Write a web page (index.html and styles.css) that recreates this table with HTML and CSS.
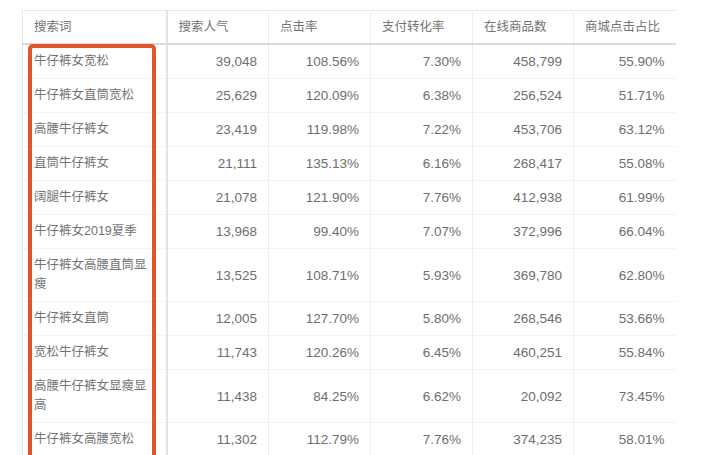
FILE: index.html
```html
<!DOCTYPE html>
<html lang="zh-CN">
<head>
<meta charset="utf-8">
<title>搜索词</title>
<link rel="stylesheet" href="styles.css">
</head>
<body>
<div class="wrap">
  <table class="data">
    <colgroup>
      <col class="c1"><col class="cn"><col class="cn"><col class="cn"><col class="c5"><col class="cn">
    </colgroup>
    <thead>
      <tr><th>搜索词</th><th>搜索人气</th><th>点击率</th><th>支付转化率</th><th>在线商品数</th><th>商城点击占比</th></tr>
    </thead>
    <tbody>
      <tr><td>牛仔裤女宽松</td><td>39,048</td><td>108.56%</td><td>7.30%</td><td>458,799</td><td>55.90%</td></tr>
      <tr><td>牛仔裤女直筒宽松</td><td>25,629</td><td>120.09%</td><td>6.38%</td><td>256,524</td><td>51.71%</td></tr>
      <tr><td>高腰牛仔裤女</td><td>23,419</td><td>119.98%</td><td>7.22%</td><td>453,706</td><td>63.12%</td></tr>
      <tr><td>直筒牛仔裤女</td><td>21,111</td><td>135.13%</td><td>6.16%</td><td>268,417</td><td>55.08%</td></tr>
      <tr><td>阔腿牛仔裤女</td><td>21,078</td><td>121.90%</td><td>7.76%</td><td>412,938</td><td>61.99%</td></tr>
      <tr><td>牛仔裤女2019夏季</td><td>13,968</td><td>99.40%</td><td>7.07%</td><td>372,996</td><td>66.04%</td></tr>
      <tr><td>牛仔裤女高腰直筒显瘦</td><td>13,525</td><td>108.71%</td><td>5.93%</td><td>369,780</td><td>62.80%</td></tr>
      <tr><td>牛仔裤女直筒</td><td>12,005</td><td>127.70%</td><td>5.80%</td><td>268,546</td><td>53.66%</td></tr>
      <tr><td>宽松牛仔裤女</td><td>11,743</td><td>120.26%</td><td>6.45%</td><td>460,251</td><td>55.84%</td></tr>
      <tr><td>高腰牛仔裤女显瘦显高</td><td>11,438</td><td>84.25%</td><td>6.62%</td><td>20,092</td><td>73.45%</td></tr>
      <tr><td>牛仔裤女高腰宽松</td><td>11,302</td><td>112.79%</td><td>7.76%</td><td>374,235</td><td>58.01%</td></tr>
    </tbody>
  </table>
  <div class="highlight"></div>
</div>
</body>
</html>
```

FILE: styles.css
```css
html, body {
  margin: 0;
  padding: 0;
  background: #ffffff;
  overflow: hidden;
}

body {
  font-family: "Liberation Sans", "Noto Sans CJK SC", sans-serif;
  color: #707070;
}

.wrap {
  position: relative;
  padding: 10px 0 0 22px;
}

.data {
  border-collapse: collapse;
  table-layout: fixed;
  width: 653px;
  border-top: 1px solid #e8e8e8;
  border-left: 1px solid #e8e8e8;
}

.c1 { width: 144px; }
.cn { width: 102px; }
.c5 { width: 101px; }

.data th {
  font-weight: normal;
  font-size: 12.5px;
  line-height: 18px;
  text-align: left;
  padding: 7px 11px 7px 11px;
  border-bottom: 2px solid #dadada;
  border-right: 1px solid #ededed;
  color: #737373;
}

.data th:last-child,
.data td:last-child {
  border-right: none;
}

.data td {
  font-size: 13.5px;
  line-height: 19px;
  padding: 7px 11px 7px 11px;
  border-bottom: 1px solid #f3f3f3;
  border-right: 1px solid #ededed;
  text-align: right;
  color: #6e6e6e;
  vertical-align: middle;
}

.data td:first-child {
  font-size: 12.5px;
  text-align: left;
  border-right: 2px solid #e3e3e3;
  word-break: break-all;
  color: #737373;
}

.data th:first-child {
  border-right: 2px solid #e3e3e3;
}

.highlight {
  position: absolute;
  left: 28px;
  top: 44px;
  width: 120px;
  height: 440px;
  border: 4px solid #e2552b;
  border-radius: 5px;
}
```
